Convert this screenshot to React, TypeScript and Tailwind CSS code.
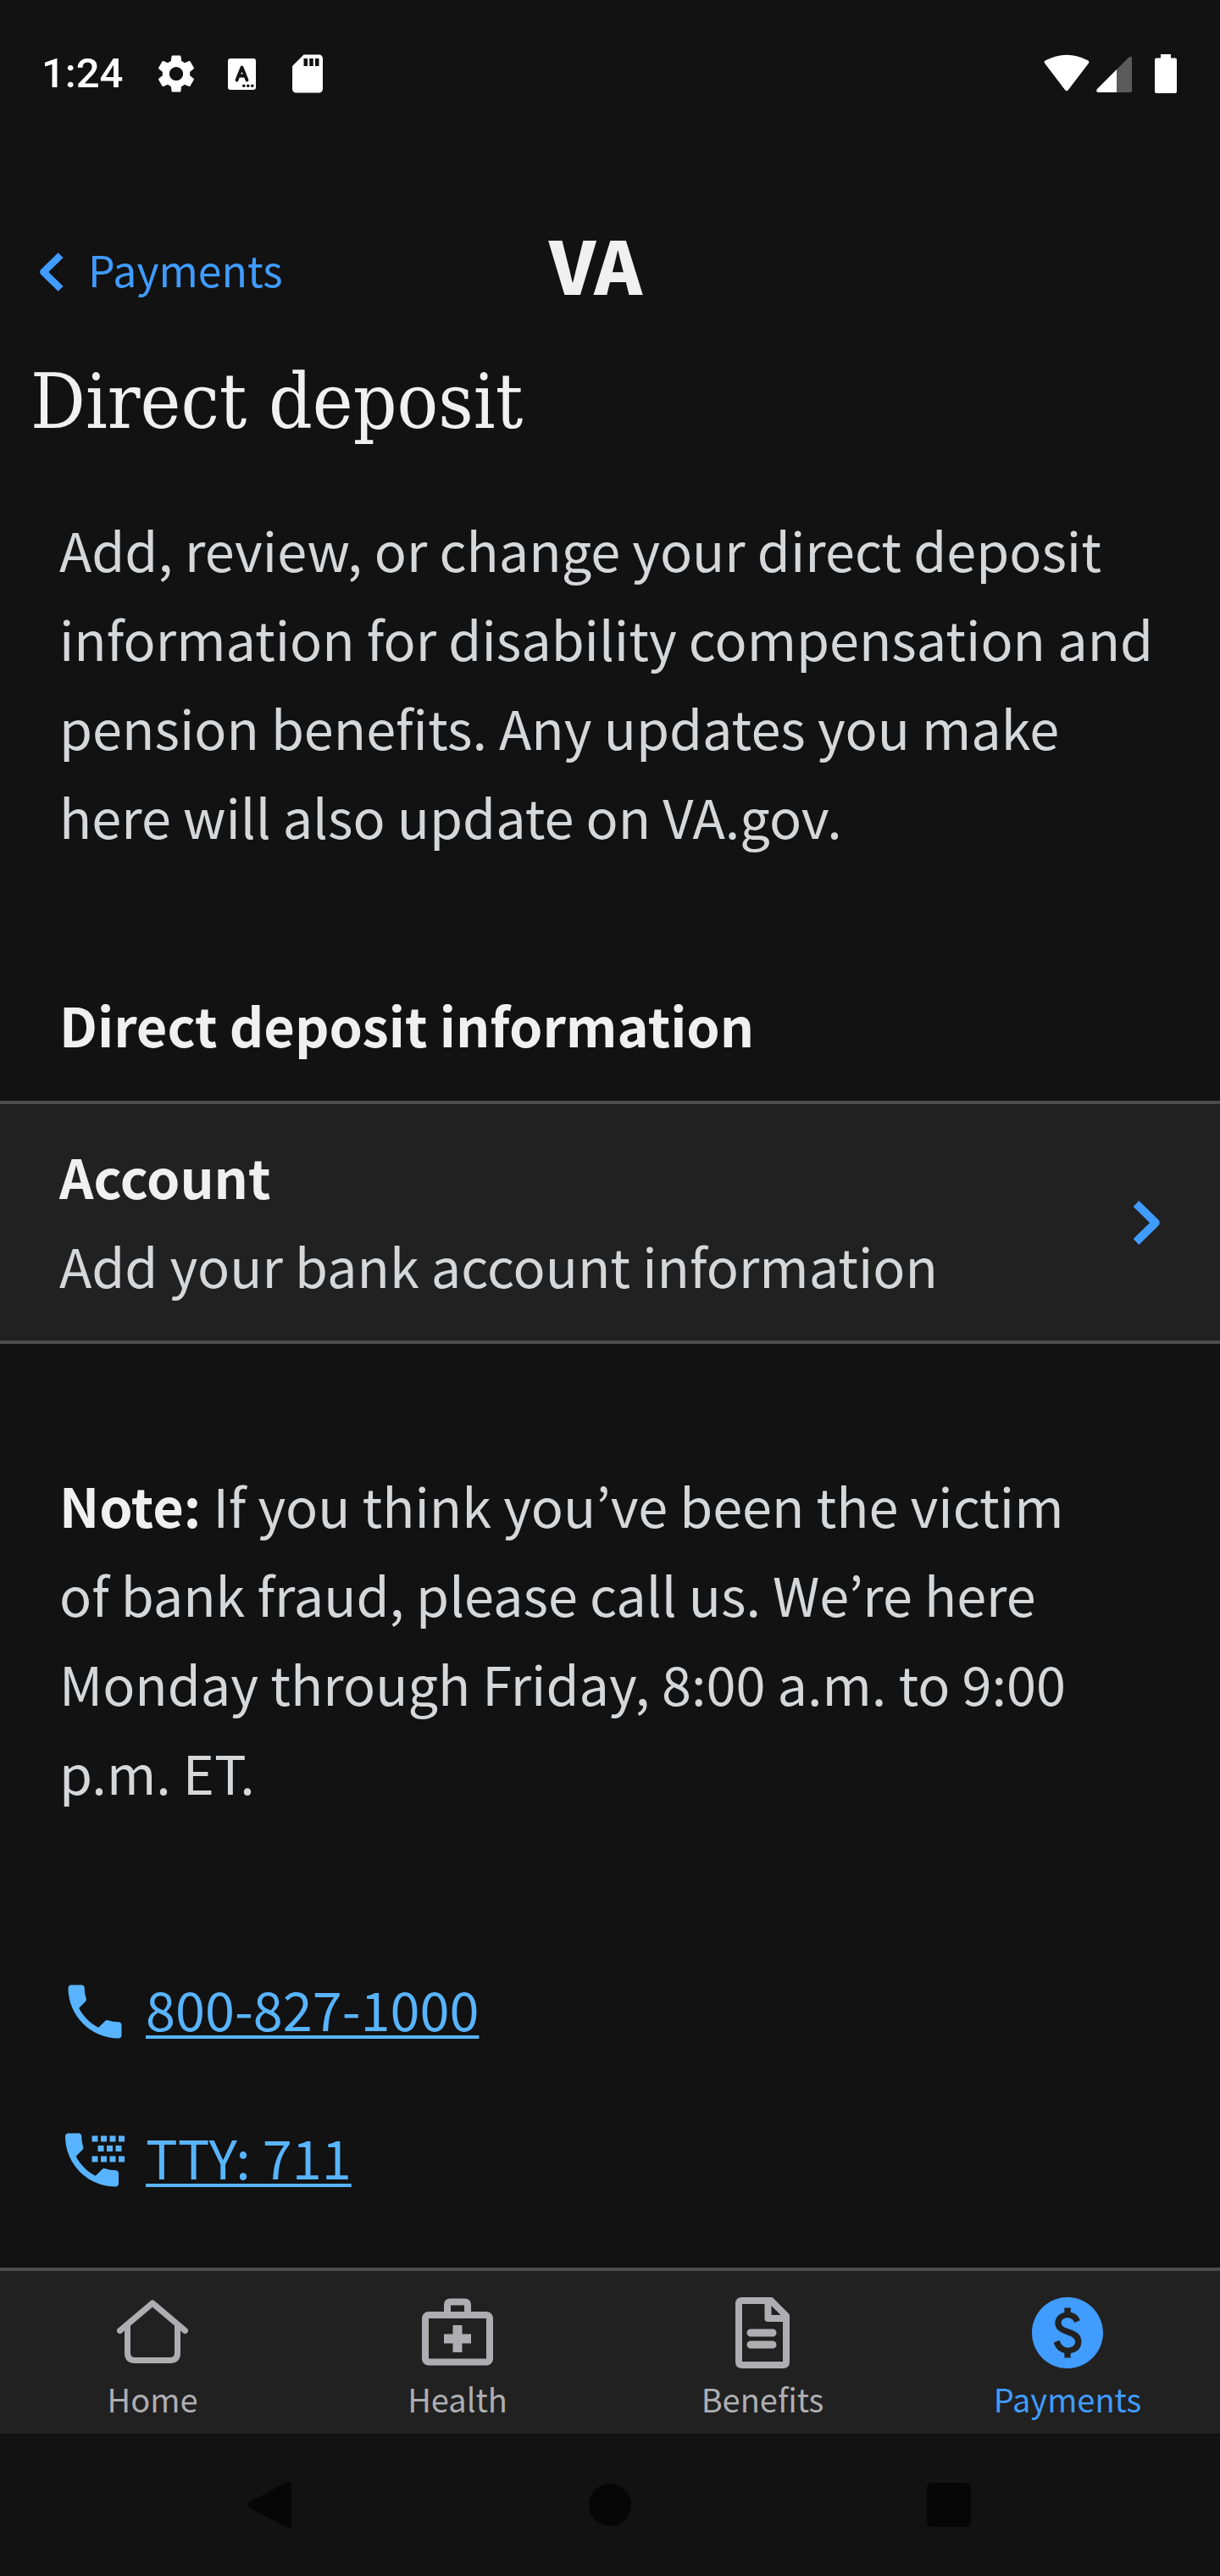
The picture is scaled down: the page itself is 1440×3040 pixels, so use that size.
import React from "react";
import { MdPhone, MdPaid, MdSettings, MdSdCard } from "react-icons/md";

const sans = "font-['Noto_Sans_CJK_KR',sans-serif]";

function Chevron({ left = false, className }: { left?: boolean; className: string }) {
  return (
    <svg viewBox="0 0 34 54" className={className} fill="none" aria-hidden="true">
      <path
        d={left ? "M29 4.5 L6 27 L29 49.5" : "M5 4.5 L28 27 L5 49.5"}
        stroke="currentColor"
        strokeWidth="9.5"
        strokeLinejoin="round"
      />
    </svg>
  );
}

function KeyboardIcon() {
  return (
    <svg viewBox="0 0 33 37" className="h-[37px] w-[33px]" aria-hidden="true">
      <rect width="33" height="37" rx="3" fill="#fff" />
      <path d="M10.5 25.5 L16.5 10.5 L22.5 25.5 M12.5 20.5 H20.5" fill="none" stroke="#121212" strokeWidth="3.8" strokeLinecap="round" strokeLinejoin="round" />
      <circle cx="18.8" cy="32.3" r="1.8" fill="#121212" />
      <circle cx="23.8" cy="32.3" r="1.8" fill="#121212" />
      <circle cx="28.8" cy="32.3" r="1.8" fill="#121212" />
    </svg>
  );
}

function TtyIcon() {
  const keys = [
    [38.5, 14], [49, 14], [59.5, 14], [70, 14],
    [45.5, 25.5], [56, 25.5], [66.5, 25.5],
    [38.5, 38], [49, 38], [59.5, 38], [70, 38],
  ];
  return (
    <svg viewBox="0 0 84 84" className="size-21" fill="currentColor" aria-hidden="true">
      <path transform="translate(-3.5 0) scale(3.5)" d="M6.62 10.79c1.44 2.83 3.76 5.14 6.59 6.59l2.2-2.2c.27-.27.67-.36 1.02-.24 1.12.37 2.33.57 3.57.57.55 0 1 .45 1 1V20c0 .55-.45 1-1 1-9.39 0-17-7.61-17-17 0-.55.45-1 1-1h3.5c.55 0 1 .45 1 1 0 1.25.2 2.45.57 3.57.11.35.03.74-.25 1.02l-2.2 2.2z" />
      {keys.map(([x, y]) => (
        <rect key={`${x}-${y}`} x={x} y={y - 0.5} width="7" height="7" />
      ))}
    </svg>
  );
}

function HomeIcon() {
  return (
    <svg viewBox="0 0 84 84" className="size-21" fill="none" stroke="currentColor" strokeWidth="7" aria-hidden="true">
      <path d="M3.5 39.5 L42 7 L80.5 39.5" strokeLinecap="round" strokeLinejoin="round" />
      <path d="M12.5 33 V66 Q12.500 74.500 21.500 74.500 H62.500 Q71.500 74.500 71.500 66 V33" />
    </svg>
  );
}

function HealthIcon() {
  return (
    <svg viewBox="0 0 84 84" className="size-21" fill="none" stroke="currentColor" strokeWidth="8" aria-hidden="true">
      <rect x="4" y="21" width="76" height="55.500" rx="4" />
      <path d="M30 20 V9.500 Q30 5.500 34 5.500 H50 Q54 5.500 54 9.500 V20" />
      <path d="M42 33 V65 M26 49 H58" strokeWidth="11" />
    </svg>
  );
}

function BenefitsIcon() {
  return (
    <svg viewBox="0 0 64 84" className="h-21 w-16" fill="none" stroke="currentColor" strokeWidth="8" strokeLinejoin="round" aria-hidden="true">
      <path d="M8 4 H42 L60 22 V76 Q60 80 56 80 H8 Q4 80 4 76 V8 Q4 4 8 4 Z" />
      <path d="M38.500 5 V25 H60" />
      <path d="M18 42 H44 M18 56 H44" strokeWidth="9" strokeLinecap="round" />
    </svg>
  );
}

function Tab({ icon, label, active = false }: { icon: React.ReactNode; label: string; active?: boolean }) {
  return (
    <a
      href="#"
      aria-current={active ? "page" : undefined}
      className={`flex flex-col items-center gap-2 pt-[31px] pb-[14px] ${active ? "text-[#409cff]" : "text-[#aeaeb2]"}`}
    >
      {icon}
      <span className="text-[38px] leading-[55px]">{label}</span>
    </a>
  );
}

export default function App() {
  return (
    <div className={`flex min-h-screen flex-col bg-[#121212] text-[#d6d7d9] ${sans}`}>
      <div className="flex h-[174px] items-center justify-between pr-[51px] pl-[49px]">
        <div className="flex items-center">
          <span className="font-[Roboto,sans-serif] text-[49px] leading-[56px] font-medium text-white">1:24</span>
          <MdSettings className="ml-[36px] size-[54px] text-white" />
          <span className="ml-[34px]"><KeyboardIcon /></span>
          <MdSdCard className="ml-[34px] size-[54px] text-white" />
        </div>
        <div className="flex items-center">
          <svg viewBox="0 0 54 46" className="h-[46px] w-[54px]" aria-hidden="true">
            <path d="M1.4 11 Q-0.5 9 2 7.300 Q27 -6 52 7.300 Q54.500 9 52.600 11 L29 42 Q27 44.500 25 42 Z" fill="#fff" />
          </svg>
          <svg viewBox="0 0 42 46" className="ml-2 h-[46px] w-[42px]" aria-hidden="true">
            <path d="M38 4 Q42 1 42 5 V43 Q42 45 40 45 H24 V18 Z" fill="#5b5b5b" />
            <path d="M24 18 V45 H2 Q-1 44 1 41 Z" fill="#fff" />
          </svg>
          <svg viewBox="0 0 26 46" className="ml-[27px] h-[46px] w-[26px]" aria-hidden="true">
            <path d="M7 0 H19 V4.500 H24 Q26 4.500 26 6.500 V44 Q26 46 24 46 H2 Q0 46 0 44 V6.500 Q0 4.500 2 4.500 H7 Z" fill="#fff" />
          </svg>
        </div>
      </div>

      <header className="grid h-[242px] grid-cols-[1fr_auto_1fr] content-start items-center pt-[87px]">
        <a href="#" className="flex items-center gap-7 pl-[46px] text-[#409cff]">
          <Chevron left className="h-[48px] w-[30px]" />
          <span className="pb-2 text-[50px] leading-[72px]">Payments</span>
        </a>
        <span className="pr-[34px] pb-5 text-[86px] leading-[100px] font-black text-[#f0f0f0]">VA</span>
      </header>

      <main className="flex grow flex-col">
        <h1 className="px-[36px] font-['DejaVu_Serif_Condensed','DejaVu_Serif',serif] text-[90px] leading-[116px] text-[#f0f0f0]">
          Direct deposit
        </h1>
        <p className="mt-[63px] px-[70px] text-[63px] leading-[105px]">
          Add, review, or change your direct deposit information for disability compensation and pension
          benefits. Any updates you make here will also update on VA.gov.
        </p>
        <h2 className="mt-[141px] px-[70px] text-[63px] leading-[105px] font-bold text-[#f0f0f0]">
          Direct deposit information
        </h2>
        <button type="button" className="mt-[38px] flex items-center justify-between border-y-4 border-[#4d4d4d] bg-[#212121] pr-[70px] pl-[70px] text-left">
          <span className="flex flex-col pt-8 pb-[37px] text-[63px] leading-[105px]">
            <span className="font-bold text-[#f0f0f0]">Account</span>
            <span>Add your bank account information</span>
          </span>
          <Chevron className="h-[54px] w-[34px] text-[#409cff]" />
        </button>
        <p className="mt-[137px] pr-[140px] pl-[70px] text-[63px] leading-[105px]">
          <b className="text-[#f0f0f0]">Note:</b> If you think you’ve been the victim of bank fraud, please call us.
          We’re here Monday through Friday, 8:00 a.m. to 9:00 p.m. ET.
        </p>
        <div className="mt-[174px] flex flex-col items-start gap-[62px] px-[70px] pb-[70px] text-[#58b4ff]">
          <a href="tel:8008271000" className="flex items-center gap-[18px]">
            <MdPhone className="size-21" />
            <span className="pb-2 text-[63px] leading-[105px] underline decoration-4 underline-offset-[5px]">800-827-1000</span>
          </a>
          <a href="tel:711" className="flex items-center gap-[18px]">
            <TtyIcon />
            <span className="pb-2 text-[63px] leading-[105px] underline decoration-4 underline-offset-[5px]">TTY: 711</span>
          </a>
        </div>
      </main>

      <nav className="grid grid-cols-4 border-t-4 border-[#4d4d4d] bg-[#212121]">
        <Tab icon={<HomeIcon />} label="Home" />
        <Tab icon={<HealthIcon />} label="Health" />
        <Tab icon={<BenefitsIcon />} label="Benefits" />
        <Tab active label="Payments" icon={<MdPaid viewBox="2 2 20 20" className="size-21" />} />
      </nav>

      <div className="grid h-[168px] grid-cols-3 items-center justify-items-center px-[120px] text-[#060606]">
        <button type="button" aria-label="Back">
          <svg viewBox="0 0 56 56" className="size-14" fill="currentColor" aria-hidden="true">
            <path d="M2 25 L47 1 Q52 -1 52 4 V52 Q52 57 47 55 L2 31 Q-1 28 2 25 Z" />
          </svg>
        </button>
        <button type="button" aria-label="Home" className="size-[50px] rounded-full bg-[#060606]" />
        <button type="button" aria-label="Recents" className="size-[52px] rounded-md bg-[#060606]" />
      </div>
    </div>
  );
}
